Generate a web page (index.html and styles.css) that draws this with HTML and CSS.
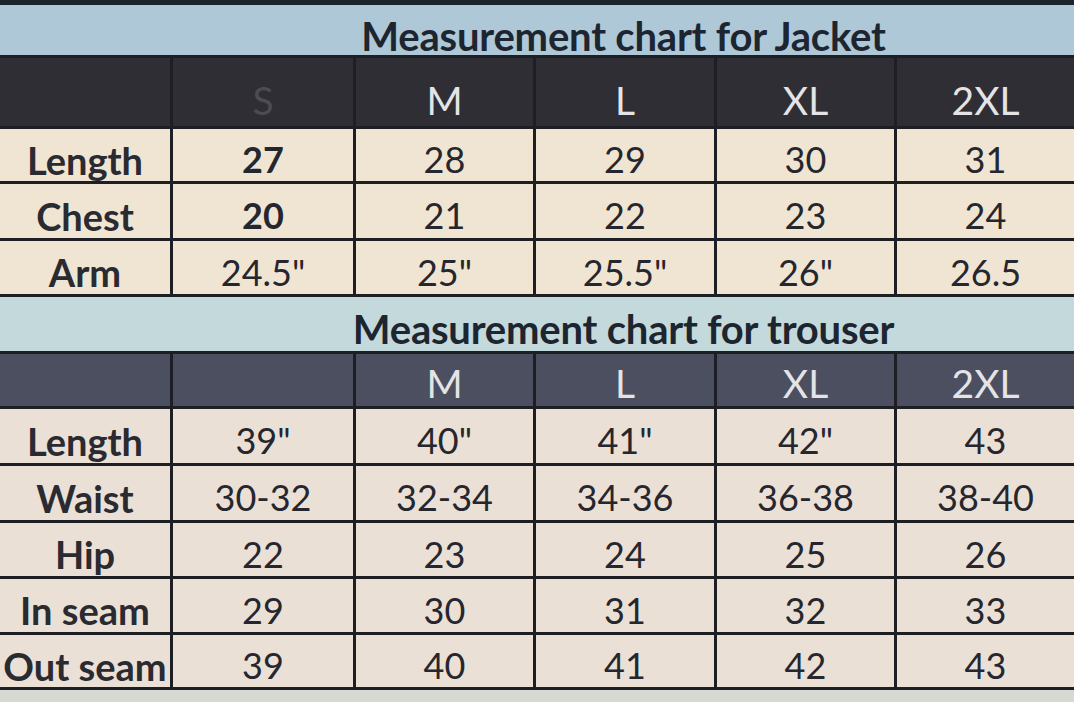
FILE: index.html
```html
<!DOCTYPE html>
<html lang="en">
<head>
<meta charset="utf-8">
<title>Measurement chart</title>
<link rel="stylesheet" href="styles.css">
</head>
<body>
<div class="page">
  <div class="top-edge"></div>

  <div class="band band-jacket"><div class="band-title">Measurement chart for Jacket</div></div>
  <div class="grid grid-jacket">
    <div class="cell head"></div>
    <div class="cell head dim">S</div>
    <div class="cell head">M</div>
    <div class="cell head">L</div>
    <div class="cell head">XL</div>
    <div class="cell head">2XL</div>

    <div class="cell label">Length</div>
    <div class="cell val strong">27</div>
    <div class="cell val">28</div>
    <div class="cell val">29</div>
    <div class="cell val">30</div>
    <div class="cell val">31</div>

    <div class="cell label">Chest</div>
    <div class="cell val strong">20</div>
    <div class="cell val">21</div>
    <div class="cell val">22</div>
    <div class="cell val">23</div>
    <div class="cell val">24</div>

    <div class="cell label">Arm</div>
    <div class="cell val">24.5"</div>
    <div class="cell val">25"</div>
    <div class="cell val">25.5"</div>
    <div class="cell val">26"</div>
    <div class="cell val">26.5</div>
  </div>

  <div class="band band-trouser"><div class="band-title">Measurement chart for trouser</div></div>
  <div class="grid grid-trouser">
    <div class="cell head"></div>
    <div class="cell head"></div>
    <div class="cell head">M</div>
    <div class="cell head">L</div>
    <div class="cell head">XL</div>
    <div class="cell head">2XL</div>

    <div class="cell label">Length</div>
    <div class="cell val">39"</div>
    <div class="cell val">40"</div>
    <div class="cell val">41"</div>
    <div class="cell val">42"</div>
    <div class="cell val">43</div>

    <div class="cell label">Waist</div>
    <div class="cell val">30-32</div>
    <div class="cell val">32-34</div>
    <div class="cell val">34-36</div>
    <div class="cell val">36-38</div>
    <div class="cell val">38-40</div>

    <div class="cell label">Hip</div>
    <div class="cell val">22</div>
    <div class="cell val">23</div>
    <div class="cell val">24</div>
    <div class="cell val">25</div>
    <div class="cell val">26</div>

    <div class="cell label">In seam</div>
    <div class="cell val">29</div>
    <div class="cell val">30</div>
    <div class="cell val">31</div>
    <div class="cell val">32</div>
    <div class="cell val">33</div>

    <div class="cell label">Out seam</div>
    <div class="cell val">39</div>
    <div class="cell val">40</div>
    <div class="cell val">41</div>
    <div class="cell val">42</div>
    <div class="cell val">43</div>
  </div>
  <div class="bottom-edge"></div>
</div>
</body>
</html>
```

FILE: styles.css
```css
html, body {
  margin: 0;
  padding: 0;
  background: #d6d9d2;
}

.page {
  width: 1074px;
  height: 702px;
  overflow: hidden;
  font-family: Lato, "Open Sans", sans-serif;
  color: #25252b;
  display: flex;
  flex-direction: column;
}

.top-edge {
  height: 5px;
  background: #1c232b;
}

.band {
  display: flex;
  align-items: center;
  padding-left: 173px;
  box-sizing: border-box;
  border-bottom: 3px solid #1e1f25;
}

.band-jacket {
  height: 53px;
  background: #aec8d8;
}

.band-trouser {
  height: 57px;
  background: #c4d9db;
}

.band-title {
  flex: 1;
  text-align: center;
  font-weight: 700;
  font-size: 40px;
  line-height: 1;
  color: #1d2530;
  padding-top: 12px;
  letter-spacing: -0.2px;
}

.band-trouser .band-title {
  padding-top: 10px;
}

.grid {
  display: grid;
  grid-template-columns: 170px 180px 177px 178px 177px 1fr;
  column-gap: 3px;
  row-gap: 3px;
  background: #1e1f25;
  border-bottom: 3px solid #1e1f25;
}

.grid-jacket {
  grid-template-rows: 68px 52px 54px 53px;
}

.grid-trouser {
  grid-template-rows: 52px 54px 54px 53px 53px 52px;
}

.cell {
  display: flex;
  align-items: center;
  justify-content: center;
  white-space: nowrap;
  overflow: visible;
  line-height: 1;
}

.head {
  color: #e4e4e6;
  font-size: 39px;
  padding-top: 16px;
}

.grid-trouser .head {
  padding-top: 6px;
}

.grid-jacket .head {
  background: #2e2e34;
}

.grid-trouser .head {
  background: #4b4f60;
}

.head.dim {
  color: #4c4c52;
}

.label {
  font-weight: 700;
  font-size: 38px;
  color: #2a2a31;
  padding-top: 9px;
}

.val {
  font-size: 36px;
  color: #26262e;
  padding-top: 8px;
}

.val.strong {
  font-weight: 700;
}

.grid-jacket .label,
.grid-jacket .val {
  background: #efe5d2;
}

.grid-trouser .label,
.grid-trouser .val {
  background: #ebe0d6;
}

.bottom-edge {
  flex: 1;
  background: #d6d9d2;
}
```
